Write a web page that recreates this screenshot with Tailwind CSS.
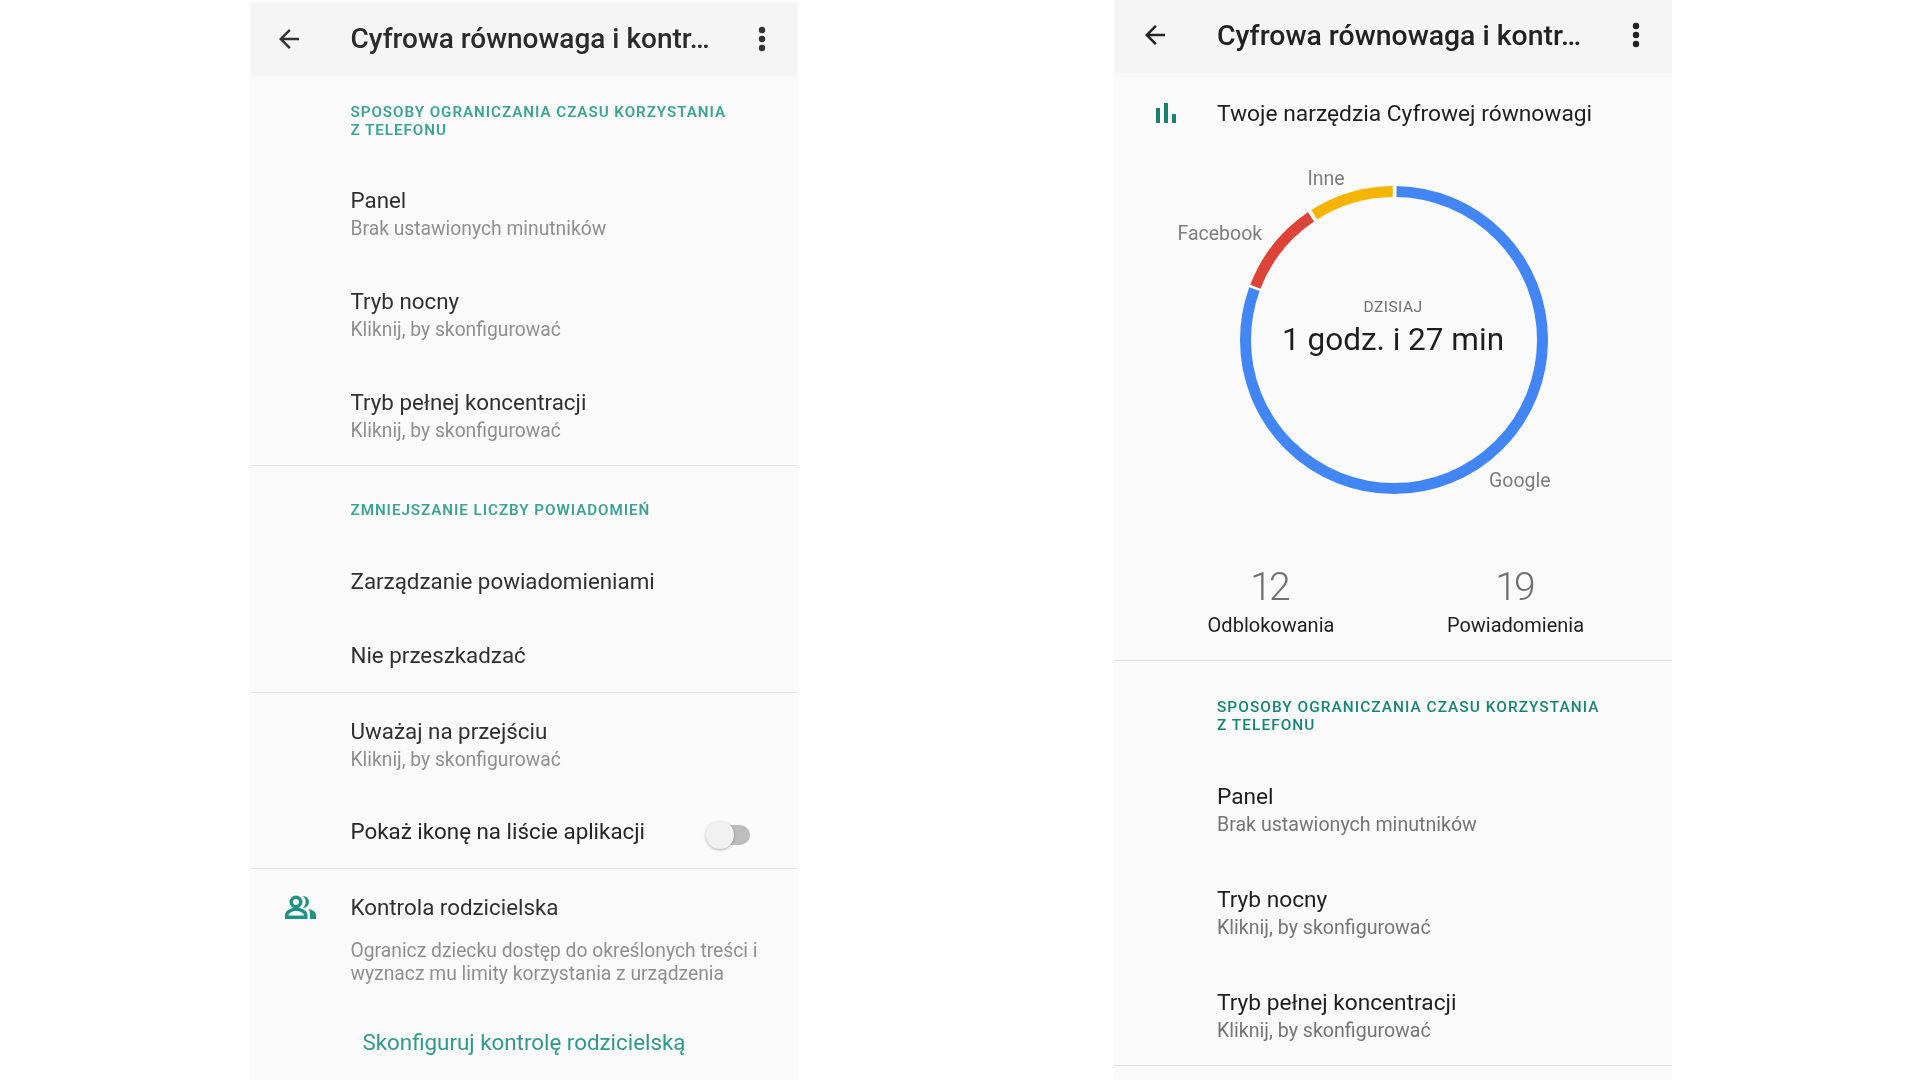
<!DOCTYPE html>
<html lang="pl">
<head>
<meta charset="utf-8">
<script src="https://cdn.jsdelivr.net/npm/@tailwindcss/browser@4"></script>
<title>Cyfrowa równowaga</title>
</head>
<body class="bg-white font-['Roboto',sans-serif] w-[1920px] h-[1080px] overflow-hidden">
<div class="flex items-start h-[1080px] pl-[250px]">

  <!-- LEFT PHONE -->
  <div class="w-[548px] mt-[2px] h-[1078px] bg-[#fafafa] overflow-hidden shrink-0 text-[#303030] blur-[0.4px]">
    <div class="h-[74px] bg-[#f5f5f5] flex items-center">
      <div class="w-[100px] pl-[24px] shrink-0">
        <svg class="w-[30px] h-[30px] text-[#333]" viewBox="0 0 24 24" fill="currentColor"><path d="M20 11H7.83l5.59-5.59L12 4l-8 8 8 8 1.41-1.41L7.83 13H20v-2z"/></svg>
      </div>
      <div class="w-[394px] shrink-0 text-[28px] font-medium leading-[36px] whitespace-nowrap text-[#2b2b2b] pl-[0.5px]">Cyfrowa równowaga i kontr…</div>
      <svg class="w-[10px] h-[26px] text-[#333] ml-[13px]" viewBox="0 0 10 26" fill="currentColor"><circle cx="5" cy="4" r="3.2"/><circle cx="5" cy="13" r="3.2"/><circle cx="5" cy="22" r="3.2"/></svg>
    </div>

    <div class="pl-[100.5px] pt-[27px] border-b border-[#e3e3e3] h-[390px]">
      <div class="text-[15.2px] font-semibold tracking-[0.95px] leading-[18px] text-[#3ba394] uppercase w-[430px] mb-[25px]">Sposoby ograniczania czasu korzystania<br>z telefonu</div>
      <div class="h-[101px] pt-[22px]"><div class="text-[22.35px] leading-[28.5px]">Panel</div><div class="text-[19.3px] leading-[27px] text-[#8f8f8f]">Brak ustawionych minutników</div></div>
      <div class="h-[101px] pt-[22px]"><div class="text-[22.35px] leading-[28.5px]">Tryb nocny</div><div class="text-[19.3px] leading-[27px] text-[#8f8f8f]">Kliknij, by skonfigurować</div></div>
      <div class="pt-[22px]"><div class="text-[22.35px] leading-[28.5px]">Tryb pełnej koncentracji</div><div class="text-[19.3px] leading-[27px] text-[#8f8f8f]">Kliknij, by skonfigurować</div></div>
    </div>

    <div class="pl-[100.5px] pt-[35px] border-b border-[#e3e3e3] h-[227px]">
      <div class="text-[15.2px] font-semibold tracking-[0.95px] leading-[18.5px] text-[#3ba394] uppercase mb-[47px]">Zmniejszanie liczby powiadomień</div>
      <div class="h-[74.5px] text-[22.35px] leading-[28px]">Zarządzanie powiadomieniami</div>
      <div class="text-[22.35px] leading-[28px]">Nie przeszkadzać</div>
    </div>

    <div class="pl-[100.5px] pt-[24px] border-b border-[#e3e3e3] h-[176px]">
      <div class="h-[100px]"><div class="text-[22.35px] leading-[28.5px]">Uważaj na przejściu</div><div class="text-[19.3px] leading-[27px] text-[#8f8f8f]">Kliknij, by skonfigurować</div></div>
      <div class="flex items-start">
        <div class="text-[22.35px] leading-[29px] w-[355px] text-[#262626] whitespace-nowrap">Pokaż ikonę na liście aplikacji</div>
        <div class="relative w-[44px] h-[20px] mt-[8px]">
          <div class="absolute right-0 top-0 w-[34px] h-[20px] rounded-full bg-[#bdbdbd]"></div>
          <div class="absolute left-0 top-[-4px] w-[28px] h-[28px] rounded-full bg-[#f1f1f1] shadow-[0_1px_3px_rgba(0,0,0,0.3)]"></div>
        </div>
      </div>
    </div>

    <div class="flex pt-[24px]">
      <div class="w-[100.5px] shrink-0 flex justify-center">
        <svg class="w-[31px] h-[24px] text-[#1f9283] mt-[2px]" viewBox="0 0 31 24" fill="currentColor"><circle cx="11" cy="7" r="4.75" fill="none" stroke="currentColor" stroke-width="3.5"/><path d="M18 1a6 6 0 0 1 0 12a8 8 0 0 0 0-12z"/><path d="M1.75 22.25v-2c0-3.500 5-6 9.500-6s9.500 2.500 9.500 6v2z" fill="none" stroke="currentColor" stroke-width="3.5"/><path d="M24 14c4 1 7 3 7 6v4h-6v-4c0-2.500-.5-4-1-6z"/></svg>
      </div>
      <div>
        <div class="text-[22.35px] leading-[28.5px]">Kontrola rodzicielska</div>
        <div class="text-[19.3px] leading-[23px] text-[#8f8f8f] mt-[17px] whitespace-nowrap">Ogranicz dziecku dostęp do określonych treści i<br>wyznacz mu limity korzystania z urządzenia</div>
        <div class="text-[22.35px] leading-[28.5px] text-[#2f9a8b] mt-[43px] ml-[12px] whitespace-nowrap">Skonfiguruj kontrolę rodzicielską</div>
      </div>
    </div>
  </div>

  <!-- RIGHT PHONE -->
  <div class="w-[558px] ml-[316px] h-[1080px] bg-[#fafafa] overflow-hidden shrink-0 text-[#1e1e1e] blur-[0.3px]">
    <div class="h-[73px] bg-[#f5f5f5] flex items-center">
      <div class="w-[103px] pl-[26px] shrink-0 mt-[-4px]">
        <svg class="w-[30px] h-[30px] text-[#222]" viewBox="0 0 24 24" fill="currentColor"><path d="M20 11H7.83l5.59-5.59L12 4l-8 8 8 8 1.41-1.41L7.83 13H20v-2z"/></svg>
      </div>
      <div class="w-[410px] shrink-0 text-[28.4px] font-medium leading-[36px] whitespace-nowrap text-[#222] mt-[-2px]">Cyfrowa równowaga i kontr…</div>
      <svg class="w-[10px] h-[26px] text-[#222] ml-[4px] mt-[-4px]" viewBox="0 0 10 26" fill="currentColor"><circle cx="5" cy="4" r="3.200"/><circle cx="5" cy="13" r="3.200"/><circle cx="5" cy="22" r="3.200"/></svg>
    </div>

    <div class="flex items-center mt-[26px] h-[28px]">
      <div class="w-[103px] pl-[41.5px] shrink-0">
        <svg class="w-[20px] h-[20px] text-[#17836f]" viewBox="0 0 20 20" fill="currentColor"><rect x="0" y="5" width="4" height="15"/><rect x="8" y="0" width="4" height="20"/><rect x="16" y="11" width="4" height="9"/></svg>
      </div>
      <div class="text-[22.77px] leading-[30px] whitespace-nowrap pt-[1px]">Twoje narzędzia Cyfrowej równowagi</div>
    </div>

    <div class="relative h-[439px]">
      <svg class="absolute left-[126px] top-[59px] w-[308px] h-[308px]" viewBox="0 0 308 308" fill="none" stroke-width="11">
        <g transform="rotate(-90 154 154)">
          <circle cx="154" cy="154" r="148.500" pathLength="360" stroke="#4285f4" stroke-dasharray="289 71" stroke-dashoffset="-1"/>
          <circle cx="154" cy="154" r="148.500" pathLength="360" stroke="#db4437" stroke-dasharray="35 325" stroke-dashoffset="-291"/>
          <circle cx="154" cy="154" r="148.500" pathLength="360" stroke="#f4b400" stroke-dasharray="32 328" stroke-dashoffset="-327.500"/>
        </g>
      </svg>
      <div class="absolute left-[185px] top-[39px] w-[54px] text-center text-[19.5px] leading-[26px] text-[#7d7d7d]">Inne</div>
      <div class="absolute left-[63.5px] top-[94px] text-[19.5px] leading-[26px] text-[#7d7d7d]">Facebook</div>
      <div class="absolute left-[375px] top-[341px] text-[19.5px] leading-[26px] text-[#7d7d7d]">Google</div>
      <div class="absolute left-[125px] top-[171px] w-[308px] flex flex-col items-center">
        <div class="text-[15.5px] leading-[18px] tracking-[0.5px] text-[#6f6f6f]">DZISIAJ</div>
        <div class="text-[31.5px] leading-[44px] mt-[2px] text-[#1e1e1e]">1 godz. i 27 min</div>
      </div>
    </div>

    <div class="flex pl-[34px] border-b border-[#e0e0e0] h-[95px]">
      <div class="w-[245px] text-center"><div class="text-[39px] leading-[42px] font-light tracking-[-3px] text-[#6f6f6f] mb-[2.500px] pr-[3px]">12</div><div class="text-[20px] leading-[28px] pl-[1px]">Odblokowania</div></div>
      <div class="w-[245px] text-center"><div class="text-[39px] leading-[42px] font-light tracking-[-3px] text-[#6f6f6f] mb-[2.500px] pr-[3px]">19</div><div class="text-[20px] leading-[28px]">Powiadomienia</div></div>
    </div>

    <div class="pl-[103px] pt-[37px] border-b border-[#e0e0e0] h-[405px]">
      <div class="text-[15.4px] font-medium tracking-[1.05px] leading-[18px] text-[#178576] uppercase w-[440px] mb-[48px]">Sposoby ograniczania czasu korzystania<br>z telefonu</div>
      <div class="h-[103px]"><div class="text-[22.7px] leading-[30px]">Panel</div><div class="text-[19.6px] leading-[26px] text-[#757575]">Brak ustawionych minutników</div></div>
      <div class="h-[103px]"><div class="text-[22.7px] leading-[30px]">Tryb nocny</div><div class="text-[19.6px] leading-[26px] text-[#757575]">Kliknij, by skonfigurować</div></div>
      <div><div class="text-[22.7px] leading-[30px]">Tryb pełnej koncentracji</div><div class="text-[19.6px] leading-[26px] text-[#757575]">Kliknij, by skonfigurować</div></div>
    </div>
  </div>
</div>
</body>
</html>
